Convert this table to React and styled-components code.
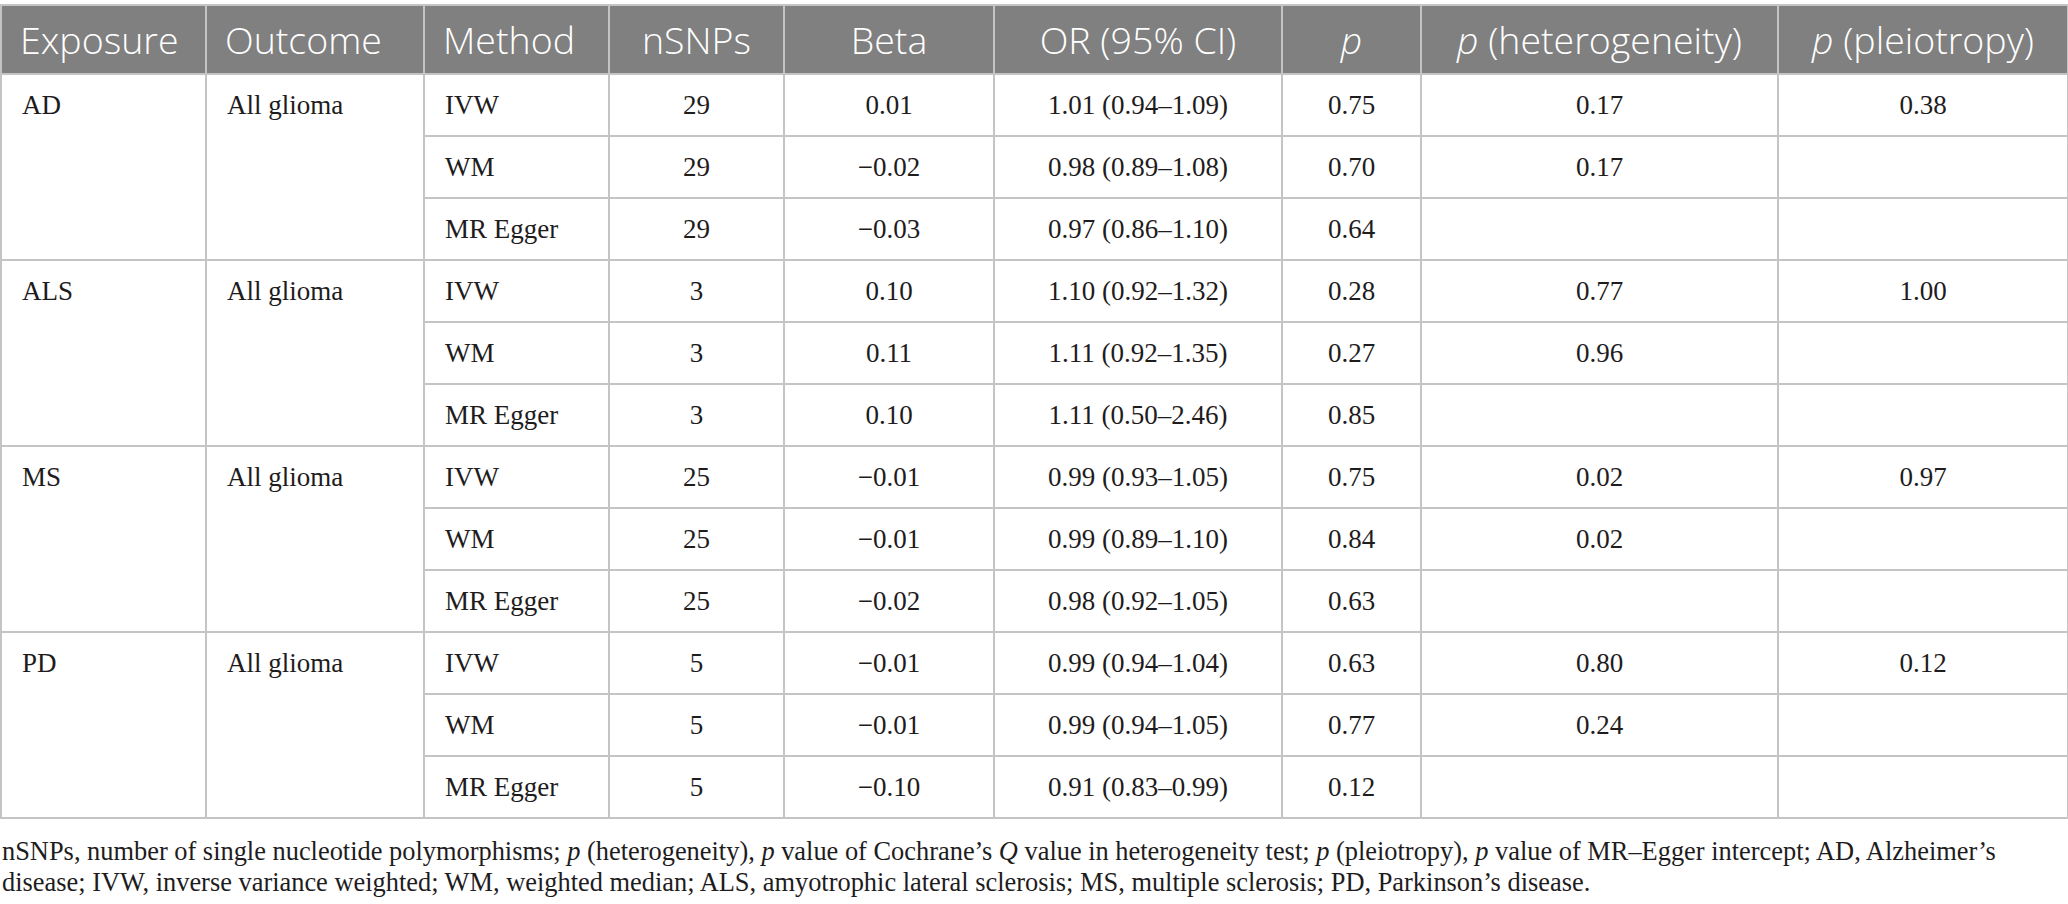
import React from "react";
import styled, { createGlobalStyle } from "styled-components";

const GlobalStyle = createGlobalStyle`
  html, body {
    margin: 0;
    padding: 0;
    background: #ffffff;
  }
`;

const Page = styled.div`
  width: 2068px;
  padding-top: 4px;
`;

const Table = styled.table`
  width: 2067px;
  border-collapse: collapse;
  table-layout: fixed;
  font-family: "Liberation Serif", "Times New Roman", serif;
  font-size: 27px;
  color: #1e1c1d;
`;

const HeadCell = styled.th`
  height: 67px;
  padding: 0 18px;
  background: #7f807f;
  color: #ffffff;
  font-family: "Open Sans", "Noto Sans", sans-serif;
  font-weight: 300;
  font-size: 37.5px;
  text-align: ${p => p.$align || "center"};
  white-space: nowrap;
  border: 2px solid #c4c4c4;
`;

const Cell = styled.td`
  height: 60px;
  padding: 0 20px;
  line-height: 60px;
  vertical-align: top;
  text-align: ${p => p.$align || "center"};
  white-space: nowrap;
  border: 2px solid #c4c4c4;
`;

const Footnote = styled.p`
  margin: 17px 0 0;
  padding-left: 2px;
  font-family: "Liberation Serif", "Times New Roman", serif;
  font-size: 26.4px;
  line-height: 31px;
  color: #1e1c1d;
  white-space: nowrap;
`;

const columns = [
  { label: "Exposure", width: 205, align: "left" },
  { label: "Outcome", width: 218, align: "left" },
  { label: "Method", width: 185, align: "left" },
  { label: "nSNPs", width: 175 },
  { label: "Beta", width: 210 },
  { label: "OR (95% CI)", width: 288 },
  { label: <i>p</i>, width: 139 },
  { label: <><i>p</i> (heterogeneity)</>, width: 357 },
  { label: <><i>p</i> (pleiotropy)</>, width: 290 }
];

const groups = [
  {
    exposure: "AD",
    outcome: "All glioma",
    rows: [
      ["IVW", "29", "0.01", "1.01 (0.94–1.09)", "0.75", "0.17", "0.38"],
      ["WM", "29", "−0.02", "0.98 (0.89–1.08)", "0.70", "0.17", ""],
      ["MR Egger", "29", "−0.03", "0.97 (0.86–1.10)", "0.64", "", ""]
    ]
  },
  {
    exposure: "ALS",
    outcome: "All glioma",
    rows: [
      ["IVW", "3", "0.10", "1.10 (0.92–1.32)", "0.28", "0.77", "1.00"],
      ["WM", "3", "0.11", "1.11 (0.92–1.35)", "0.27", "0.96", ""],
      ["MR Egger", "3", "0.10", "1.11 (0.50–2.46)", "0.85", "", ""]
    ]
  },
  {
    exposure: "MS",
    outcome: "All glioma",
    rows: [
      ["IVW", "25", "−0.01", "0.99 (0.93–1.05)", "0.75", "0.02", "0.97"],
      ["WM", "25", "−0.01", "0.99 (0.89–1.10)", "0.84", "0.02", ""],
      ["MR Egger", "25", "−0.02", "0.98 (0.92–1.05)", "0.63", "", ""]
    ]
  },
  {
    exposure: "PD",
    outcome: "All glioma",
    rows: [
      ["IVW", "5", "−0.01", "0.99 (0.94–1.04)", "0.63", "0.80", "0.12"],
      ["WM", "5", "−0.01", "0.99 (0.94–1.05)", "0.77", "0.24", ""],
      ["MR Egger", "5", "−0.10", "0.91 (0.83–0.99)", "0.12", "", ""]
    ]
  }
];

export default function App() {
  return (
    <Page>
      <GlobalStyle />
      <Table>
        <colgroup>
          {columns.map((c, i) => (
            <col key={i} style={{ width: c.width }} />
          ))}
        </colgroup>
        <thead>
          <tr>
            {columns.map((c, i) => (
              <HeadCell key={i} $align={c.align}>
                {c.label}
              </HeadCell>
            ))}
          </tr>
        </thead>
        <tbody>
          {groups.map(g =>
            g.rows.map((r, i) => (
              <tr key={g.exposure + i}>
                {i === 0 && (
                  <>
                    <Cell rowSpan={g.rows.length} $align="left">
                      {g.exposure}
                    </Cell>
                    <Cell rowSpan={g.rows.length} $align="left">
                      {g.outcome}
                    </Cell>
                  </>
                )}
                {r.map((v, j) => (
                  <Cell key={j} $align={j === 0 ? "left" : "center"}>
                    {v}
                  </Cell>
                ))}
              </tr>
            ))
          )}
        </tbody>
      </Table>
      <Footnote>
        nSNPs, number of single nucleotide polymorphisms; <i>p</i> (heterogeneity), <i>p</i> value of
        Cochrane’s <i>Q</i> value in heterogeneity test; <i>p</i> (pleiotropy), <i>p</i> value of
        MR–Egger intercept; AD, Alzheimer’s
        <br />
        disease; IVW, inverse variance weighted; WM, weighted median; ALS, amyotrophic lateral
        sclerosis; MS, multiple sclerosis; PD, Parkinson’s disease.
      </Footnote>
    </Page>
  );
}
